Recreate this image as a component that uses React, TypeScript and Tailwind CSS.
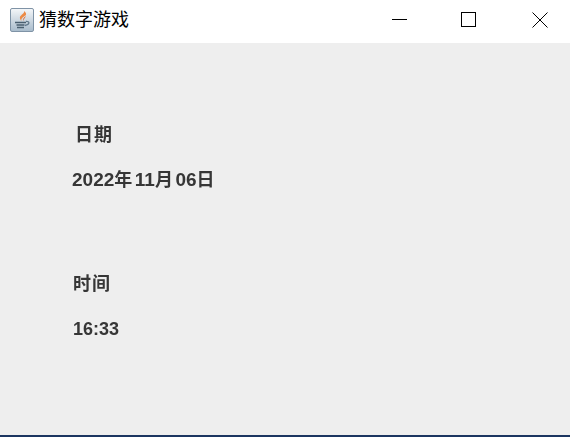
export default function App() {
  const font = "font-['Liberation_Sans','Noto_Sans_CJK_SC',sans-serif]";
  return (
    <div className={`w-[570px] h-[437px] flex flex-col bg-[#eeeeee] overflow-hidden ${font}`}>
      <header className="h-[43px] shrink-0 bg-white flex items-center pb-[4px]">
        <div className="ml-[10px] w-[24px] h-[24px] rounded-[2px] border border-[#7f93a6] bg-gradient-to-b from-[#f4f6f8] to-[#a9bccc] flex items-center justify-center">
          <svg width="20" height="20" viewBox="0 0 20 20">
            <path d="M12 1c1 3-5 4-4 7.500.3 1 .8 2 1.500 2.800C8.500 8.500 11 7 13.500 5.500 15 4 13.500 2 12 1z" fill="#ec8a45" />
            <path d="M14 6c-2.500 1.500-3.500 3-2.500 5.500C11 9.500 13 8 14 6z" fill="#dd5f22" />
            <path d="M3 12.500h11M4.500 15h8M5 17.500h7" stroke="#4a5f70" strokeWidth="1.500" fill="none" />
            <path d="M14 11.500c4-.5 4 3-1 4" stroke="#60798c" strokeWidth="1.300" fill="none" />
          </svg>
        </div>
        <span className="ml-[5px] mt-[1px] text-[18px] leading-none text-black">猜数字游戏</span>
        <div className="ml-auto flex items-center">
          <button className="w-[69px] h-[39px] flex items-center justify-center">
            <svg width="15" height="15" viewBox="0 0 15 15"><path d="M0 7.500h15" stroke="#000" strokeWidth="1" /></svg>
          </button>
          <button className="w-[69px] h-[39px] flex items-center justify-center">
            <svg width="15" height="15" viewBox="0 0 15 15"><rect x="0.500" y="0.500" width="14" height="14" fill="none" stroke="#000" strokeWidth="1" /></svg>
          </button>
          <button className="w-[67px] h-[39px] flex items-center justify-center pl-[6px]">
            <svg width="16" height="16" viewBox="0 0 16 16"><path d="M0.500 0.500l15 15M15.500 0.500l-15 15" stroke="#000" strokeWidth="1" /></svg>
          </button>
        </div>
      </header>
      <main className="flex-1 flex flex-col pl-[73px] pt-[81px] text-[18px] leading-[22px] font-bold text-[#363636] blur-[0.5px]">
        <p className="pl-[2px] tracking-[1px]">日期</p>
        <p className="mt-[23px] -ml-[1px] whitespace-nowrap">
          <span className="text-[19px]">2022</span>
          <span className="tracking-[2.5px]">年</span>
          <span className="text-[19px]">11</span>
          <span className="tracking-[2.5px]">月</span>
          <span className="text-[19px]">06</span>
          <span className="tracking-[2.5px]">日</span>
        </p>
        <p className="mt-[82px] tracking-[1px]">时间</p>
        <p className="mt-[23px]">16:33</p>
      </main>
      <div className="h-[2px] shrink-0 bg-[#1b3560]" />
    </div>
  );
}
